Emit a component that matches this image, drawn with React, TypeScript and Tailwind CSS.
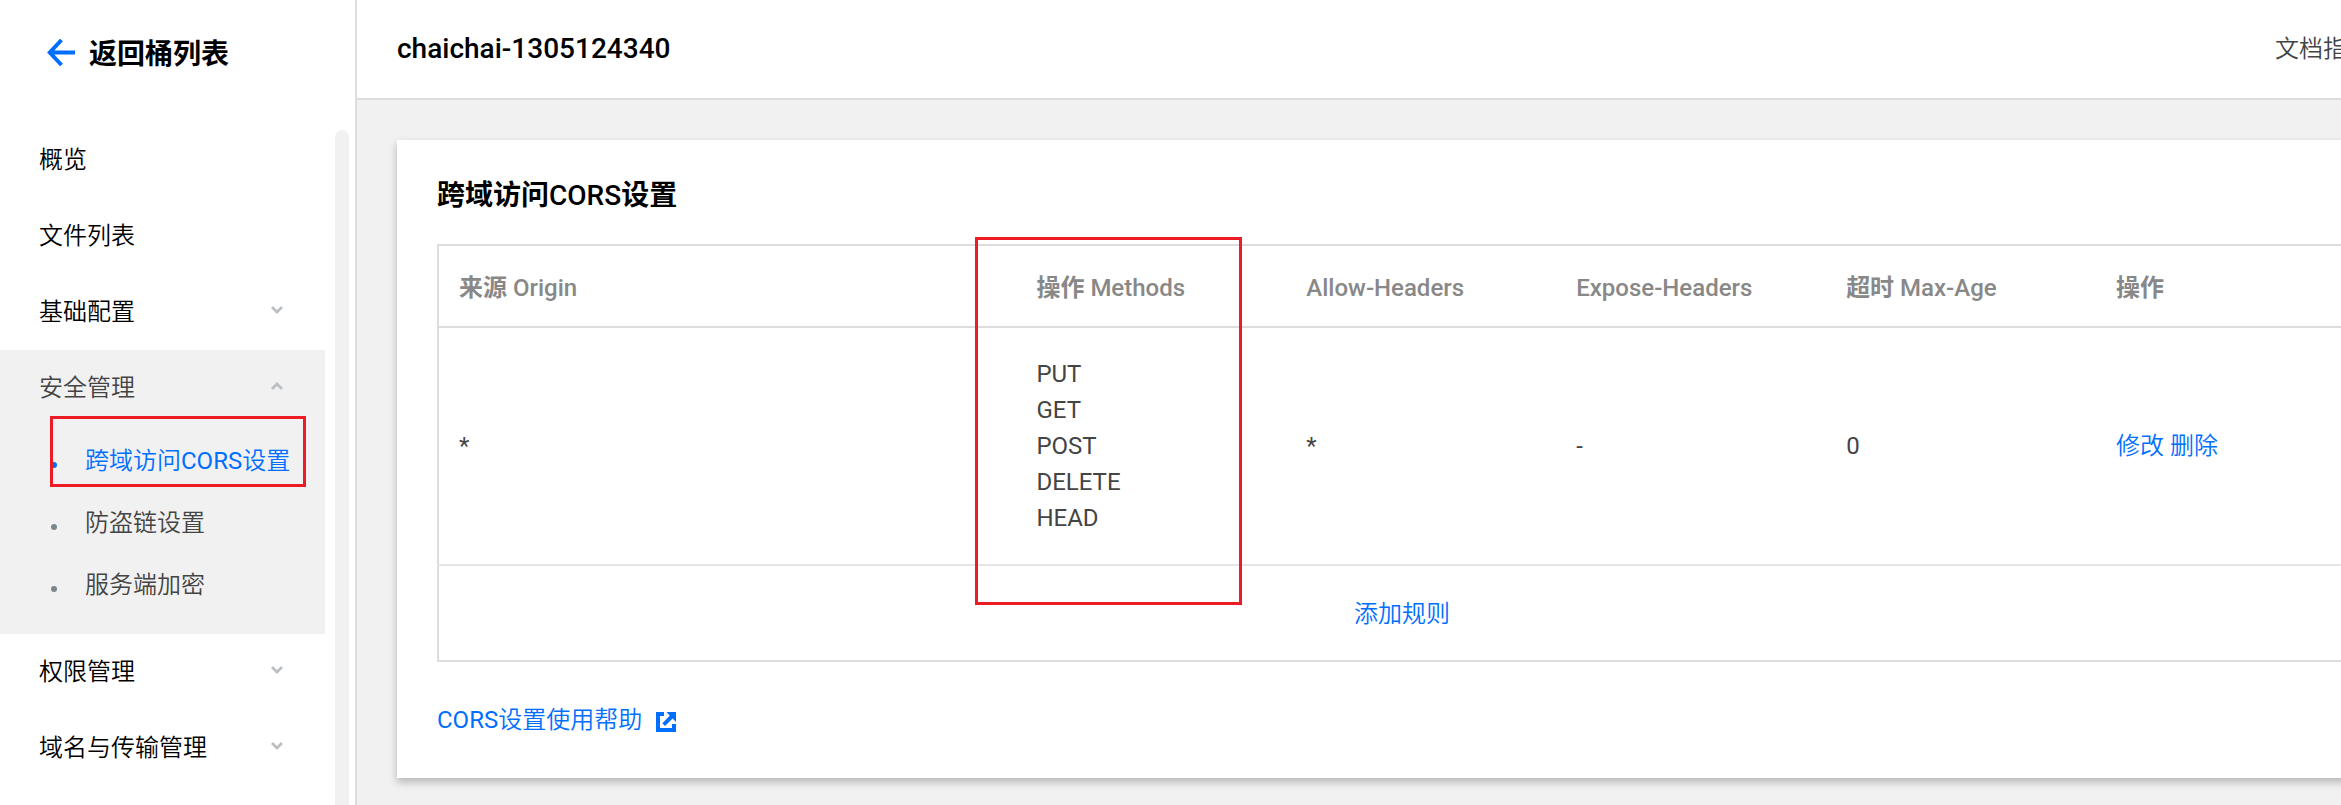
import React, { useState } from "react";

const methods = ["PUT", "GET", "POST", "DELETE", "HEAD"];

function ArrowLeft() {
  return (
    <svg width="28" height="28" viewBox="0 0 28 28" fill="none" stroke="#006eff" strokeWidth="4" aria-hidden="true">
      <path d="M14.5 1L2.8 13.5l11.7 12.5M3 13.5h25" />
    </svg>
  );
}

function Chevron({ open }: { open?: boolean }) {
  return (
    <svg className="mb-1" width="12" height="8" viewBox="0 0 12 8" fill="none" stroke="#bbbfc2" strokeWidth="2.8" aria-hidden="true">
      <path d={open ? "M1 7l5-5 5 5" : "M1 1l5 5 5-5"} />
    </svg>
  );
}

function ExternalIcon() {
  return (
    <svg width="20" height="20" viewBox="0 0 20 20" fill="#006eff" aria-hidden="true">
      <path d="M0 0h8v4H4v12h12v-4h4v8H0z" />
      <path d="M10.5 0H20v10l-3.4-3.4L9 14l-2.7-2.7 7.4-7.6z" />
    </svg>
  );
}

function MenuItem({ label, group, open, onClick }: { label: string; group?: boolean; open?: boolean; onClick?: () => void }) {
  const cls = "flex h-[76px] w-full items-center justify-between pl-[39px] pr-[42px] text-left";
  if (!group) {
    return (
      <a href="#" className={cls}>
        {label}
      </a>
    );
  }
  return (
    <button type="button" aria-expanded={!!open} onClick={onClick} className={open ? cls + " text-[#444]" : cls}>
      {label}
      <Chevron open={open} />
    </button>
  );
}

function SubItem({ label, active }: { label: string; active?: boolean }) {
  return (
    <li className={active ? "relative text-[#006eff]" : "text-[#444]"}>
      <a href="#" className="flex h-[62px] items-center pl-[51px]">
        <span className={active ? "mt-2 size-1.5 rounded-full bg-[#006eff]" : "mt-2 size-1.5 rounded-full bg-[#7b868c]"} />
        <span className="ml-7">{label}</span>
      </a>
      {active && <span className="pointer-events-none absolute -top-3.5 left-[50px] h-[71px] w-[256px] border-3 border-[#ed1c24]" />}
    </li>
  );
}

export default function App() {
  const [open, setOpen] = useState(true);
  return (
    <div className="h-screen overflow-hidden bg-[#f1f1f1] font-[Roboto,'Noto_Sans_CJK_SC_DemiLight','Noto_Sans_CJK_SC',sans-serif] text-2xl leading-9 text-black">
      <div className="flex h-full min-w-[2447px]">
        <aside className="flex w-[357px] shrink-0 flex-col border-r-2 border-[#ddd] bg-white">
          <a href="#" className="flex h-[106px] shrink-0 items-center gap-3.5 pl-[47px] font-[Roboto,'Noto_Sans_CJK_SC',sans-serif] text-[28px] font-bold">
            <ArrowLeft />
            <span className="pt-1">返回桶列表</span>
          </a>
          <div className="flex min-h-0 flex-1 overflow-hidden pt-4">
            <nav className="w-[325px]">
              <MenuItem label="概览" />
              <MenuItem label="文件列表" />
              <MenuItem label="基础配置" group />
              <div className={open ? "bg-[#f1f1f1] pb-[18px]" : ""}>
                <MenuItem label="安全管理" group open={open} onClick={() => setOpen(!open)} />
                {open && (
                  <ul className="pt-1">
                    <SubItem label="跨域访问CORS设置" active />
                    <SubItem label="防盗链设置" />
                    <SubItem label="服务端加密" />
                  </ul>
                )}
              </div>
              <MenuItem label="权限管理" group />
              <MenuItem label="域名与传输管理" group />
            </nav>
            <div className="mt-2 ml-2.5 w-3.5 rounded-t-full bg-[#f1f1f1]" />
          </div>
        </aside>

        <div className="min-w-0 flex-1">
          <header className="flex h-[100px] items-center justify-between border-b-2 border-[#ddd] bg-white px-10">
            <h1 className="text-[28px] font-medium">chaichai-1305124340</h1>
            <a href="#" className="flex items-center gap-4 text-[#444]">
              文档指引
              <ExternalIcon />
            </a>
          </header>

          <main className="p-10">
            <section className="bg-white p-10 shadow-[0_4px_8px_rgba(0,0,0,0.25)]">
              <h2 className="mb-8 font-[Roboto,'Noto_Sans_CJK_SC',sans-serif] text-[28px] leading-8 font-bold">
                跨域访问<span className="font-medium">CORS</span>设置
              </h2>
              <div className="relative">
                <table className="w-full table-fixed border-collapse border-2 border-[#ddd] text-left text-[#444]">
                  <colgroup>
                    <col className="w-[30%]" />
                    <col span={5} className="w-[14%]" />
                  </colgroup>
                  <thead className="font-[Roboto,'Noto_Sans_CJK_SC',sans-serif] text-[#888]">
                    <tr className="h-[82px] border-b-2 border-[#ddd]">
                      <th className="px-5 pt-1 font-bold">来源 <span className="font-medium">Origin</span></th>
                      <th className="px-5 pt-1 font-bold">操作 <span className="font-medium">Methods</span></th>
                      <th className="px-5 pt-1 font-medium">Allow-Headers</th>
                      <th className="px-5 pt-1 font-medium">Expose-Headers</th>
                      <th className="px-5 pt-1 font-bold">超时 <span className="font-medium">Max-Age</span></th>
                      <th className="px-5 pt-1 font-bold">操作</th>
                    </tr>
                  </thead>
                  <tbody>
                    <tr className="h-[238px] border-b-2 border-[#e5e5e5]">
                      <td className="px-5">*</td>
                      <td className="px-5">
                        {methods.map((m) => (
                          <div key={m}>{m}</div>
                        ))}
                      </td>
                      <td className="px-5">*</td>
                      <td className="px-5">-</td>
                      <td className="px-5">0</td>
                      <td className="px-5 text-[#006eff]">
                        <a href="#">修改</a> <a href="#">删除</a>
                      </td>
                    </tr>
                    <tr className="h-[96px]">
                      <td colSpan={6} className="pt-0.5 text-center">
                        <button type="button" className="text-[#006eff]">添加规则</button>
                      </td>
                    </tr>
                  </tbody>
                </table>
                <span className="pointer-events-none absolute -top-[7px] left-[538px] h-[368px] w-[267px] border-3 border-[#ed1c24]" />
              </div>
              <a href="#" className="mt-10 flex items-center gap-3.5 text-[#006eff]">
                CORS设置使用帮助
                <span className="pt-1">
                  <ExternalIcon />
                </span>
              </a>
            </section>
          </main>
        </div>
      </div>
    </div>
  );
}
